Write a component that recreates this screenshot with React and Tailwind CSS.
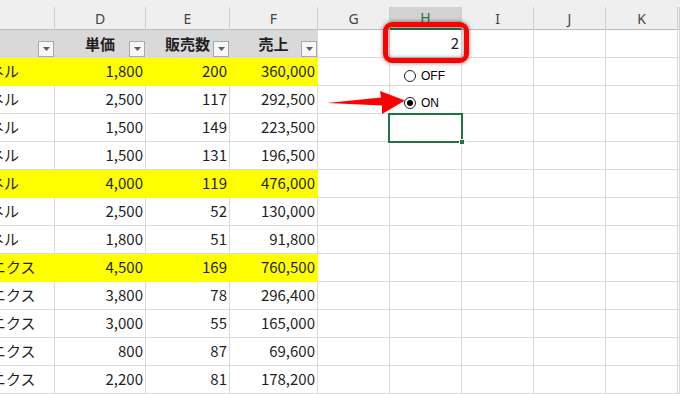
import React from 'react';

const letters = ['', 'D', 'E', 'F', 'G', 'H', 'I', 'J', 'K', ''];

const rows = [
  ['ネル', '1,800', '200', '360,000', true],
  ['ネル', '2,500', '117', '292,500'],
  ['ネル', '1,500', '149', '223,500'],
  ['ネル', '1,500', '131', '196,500'],
  ['ネル', '4,000', '119', '476,000', true],
  ['ネル', '2,500', '52', '130,000'],
  ['ネル', '1,800', '51', '91,800'],
  ['ニクス', '4,500', '169', '760,500', true],
  ['ニクス', '3,800', '78', '296,400'],
  ['ニクス', '3,000', '55', '165,000'],
  ['ニクス', '800', '87', '69,600'],
  ['ニクス', '2,200', '81', '178,200'],
];

const grid = 'grid grid-cols-[55px_91px_84px_88px_72px_72px_72px_72px_72px_1fr]';

const Cell = ({ fill, className = 'overflow-hidden', children }) => {
  let tone = 'bg-white border-[#dadada]';
  if (fill === 'yellow') tone = 'bg-[#ffff00] border-[#ffff00]';
  if (fill === 'head') tone = 'bg-[#d9d9d9] border-[#d9d9d9]';
  return (
    <div className={`relative h-[28px] border-r border-b flex items-center ${tone} ${className}`}>
      {children}
    </div>
  );
};

const FilterBtn = () => (
  <span className="absolute right-0 bottom-0 w-[16px] h-[16px] border border-[#a9a9a9] bg-[#f7f7f7] flex items-center justify-center">
    <svg width="7" height="4" viewBox="0 0 7 4">
      <path d="M0 0h7L3.5 4z" fill="#5f5f5f" />
    </svg>
  </span>
);

const Radio = ({ on, label, top }) => (
  <div className={`flex items-center pl-[14px] ${top}`}>
    <span className="w-[12px] h-[12px] rounded-full border border-[#222] bg-white flex items-center justify-center">
      {on && <span className="w-[6px] h-[6px] rounded-full bg-black" />}
    </span>
    <span className="ml-[5px] text-[12px] text-black font-['Liberation_Sans',Arial,sans-serif]">{label}</span>
  </div>
);

const App = () => {
  return (
    <div className="relative w-[680px] h-[394px] overflow-hidden bg-white text-[#1f1f1f] font-['Noto_Sans_CJK_JP',sans-serif]">
      {/* column letters */}
      <div className="bg-[#efefef] pt-[7px]">
        <div className={`${grid} h-[23px] border-b border-[#bdbdbd]`}>
          {letters.map((l, i) => (
            <div
              key={i}
              className={`flex items-center justify-center border-r border-[#cfcfcf] text-[14px] font-['Noto_Sans',sans-serif] ${
                l === 'H' ? 'bg-[#d2d2d2] text-[#217346] border-b-2 border-b-[#217346]' : 'text-[#444]'
              }`}
            >
              {l}
            </div>
          ))}
        </div>
      </div>

      {/* table header row */}
      <div className={grid}>
        <Cell fill="head"><FilterBtn /></Cell>
        {['単価', '販売数', '売上'].map((h) => (
          <Cell key={h} fill="head" className="justify-center pt-[2px]">
            <span className="text-[15px] font-bold">{h}</span>
            <FilterBtn />
          </Cell>
        ))}
        <Cell />
        <Cell className="justify-end pr-[2px] text-[15px]">2</Cell>
        <Cell />
        <Cell />
        <Cell />
        <Cell />
      </div>

      {rows.map(([name, price, qty, total, hi], r) => {
        const fill = hi ? 'yellow' : undefined;
        return (
          <div key={r} className={grid}>
            <Cell fill={fill} className="overflow-hidden text-[15px] whitespace-nowrap">
              <span className={name === 'ネル' ? 'ml-[-11px]' : 'ml-[-9px]'}>{name}</span>
            </Cell>
            <Cell fill={fill} className="justify-end pr-[2px] text-[15px]">{price}</Cell>
            <Cell fill={fill} className="justify-end pr-[2px] text-[15px]">{qty}</Cell>
            <Cell fill={fill} className="justify-end pr-[2px] text-[15px]">{total}</Cell>
            <Cell />
            <Cell>
              {r === 0 && <Radio label="OFF" top="pt-[9px]" />}
              {r === 1 && <Radio on label="ON" top="pt-[6px]" />}
            </Cell>
            <Cell />
            <Cell />
            <Cell />
            <Cell />
          </div>
        );
      })}

      {/* active cell selection */}
      <div className="absolute z-10 left-[388px] top-[113px] w-[75px] h-[30px] border-2 border-[#217346]" />
      <div className="absolute z-10 left-[459px] top-[139px] w-[6px] h-[6px] bg-[#217346] border border-white" />

      {/* annotations */}
      <div className="absolute z-20 left-[383px] top-[22px] w-[86px] h-[41px] border-[5px] border-[#ff0000] rounded-[9px] shadow-[0_0_4px_rgba(0,0,0,0.5),inset_0_0_4px_rgba(0,0,0,0.5)]" />
      <svg className="absolute z-20 left-0 top-0 pointer-events-none" width="680" height="394">
        <polygon points="327,103 381,97.5 380,91 405,100.5 382,114 382,105.5" fill="#ff0000" />
      </svg>
    </div>
  );
};

export default App;
